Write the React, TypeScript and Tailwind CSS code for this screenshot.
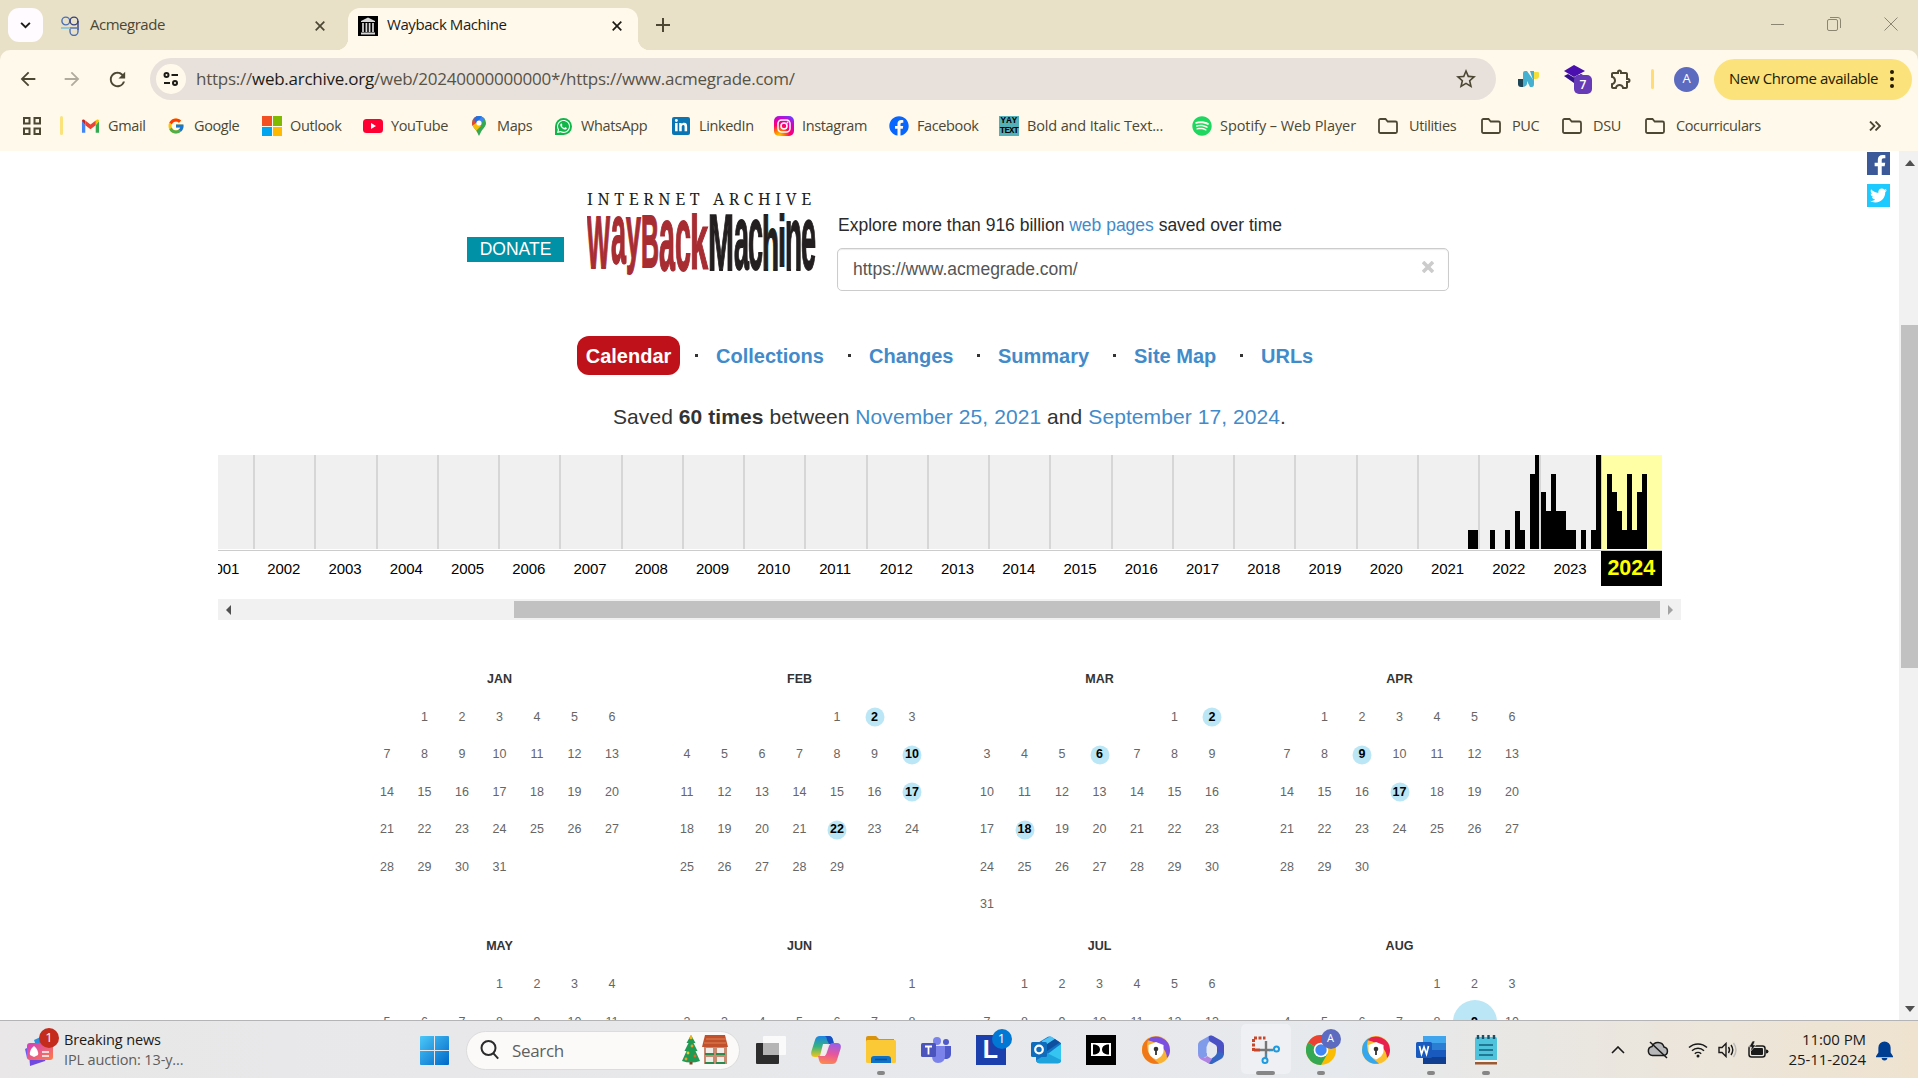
import React from "react";
import { FcGoogle } from "react-icons/fc";
import { FaTwitter, FaFacebookF, FaWhatsapp, FaLinkedinIn, FaSpotify, FaFacebook } from "react-icons/fa";
import { MdRefresh, MdStarOutline, MdOutlineExtension, MdArrowBack, MdArrowForward } from "react-icons/md";

type Bookmark = { label: string; icon: React.ReactNode; width: string; folder?: boolean; tracking?: string };

/* ---------- bookmark icons ---------- */

const GmailIcon = () => (
  <svg viewBox="0 0 20 16" className="h-4 w-[19px]">
    <path d="M1 3v12h3.5V7z" fill="#4285f4" />
    <path d="M19 3v12h-3.5V7z" fill="#34a853" />
    <path d="M1 3l3.5 4V2.5C3 .5 1 1 1 3z" fill="#c5221f" />
    <path d="M19 3l-3.5 4V2.5C17 .5 19 1 19 3z" fill="#fbbc04" />
    <path d="M4.500 2.300L10 6.500l5.500-4.200v5L10 11.500 4.500 7.300z" fill="#ea4335" />
  </svg>
);
const OutlookTiles = () => (
  <span className="grid size-5 grid-cols-2 gap-px">
    <i className="bg-[#f25022]" />
    <i className="bg-[#7fba00]" />
    <i className="bg-[#00a4ef]" />
    <i className="bg-[#ffb900]" />
  </span>
);
const YouTubeIcon = () => (
  <svg viewBox="0 0 20 14" className="h-[14px] w-5">
    <rect width="20" height="14" rx="3.500" fill="#ff0033" />
    <path d="M8 4l5 3-5 3z" fill="#fff" />
  </svg>
);
const MapsIcon = () => (
  <svg viewBox="0 0 14 20" className="h-5 w-[14px]">
    <defs>
      <clipPath id="pin">
        <path d="M7 0a7 7 0 0 1 7 7c0 4-3.500 5.500-5.500 10L7 20l-1.500-3C3.500 12.500 0 11 0 7a7 7 0 0 1 7-7z" />
      </clipPath>
    </defs>
    <g clipPath="url(#pin)">
      <rect width="14" height="20" fill="#34a853" />
      <path d="M0 0h14v2L7 8z" fill="#4285f4" />
      <path d="M0 0h5l2 5-5 5H0z" fill="#ea4335" />
      <path d="M4 0h6L4 8 2 3z" fill="#1a73e8" />
      <path d="M0 10l4-3 5 3-6 6z" fill="#fbbc04" />
    </g>
    <circle cx="7" cy="7" r="2.600" fill="#fff" />
  </svg>
);
const WhatsAppIcon = () => (
  <span className="flex size-[17px] items-center justify-center rounded-full rounded-bl-[3px] bg-[#10b748]">
    <FaWhatsapp className="size-[15px] text-white" />
  </span>
);
const LinkedInIcon = () => (
  <span className="flex size-[18px] items-center justify-center rounded-[2px] bg-[#0b74b3]">
    <FaLinkedinIn className="size-[14px] text-white" />
  </span>
);
const InstagramIcon = () => (
  <svg viewBox="0 0 20 20" className="size-5">
    <defs>
      <radialGradient id="ig" cx="0.250" cy="1" r="1.100">
        <stop offset="0" stopColor="#ffd600" />
        <stop offset="0.250" stopColor="#ff7a00" />
        <stop offset="0.500" stopColor="#ff0169" />
        <stop offset="0.800" stopColor="#d300c5" />
        <stop offset="1" stopColor="#7638fa" />
      </radialGradient>
    </defs>
    <rect width="20" height="20" rx="5" fill="url(#ig)" />
    <rect x="4" y="4" width="12" height="12" rx="3.500" fill="none" stroke="#fff" strokeWidth="1.500" />
    <circle cx="10" cy="10" r="3" fill="none" stroke="#fff" strokeWidth="1.500" />
    <circle cx="13.500" cy="6.500" r="0.900" fill="#fff" />
  </svg>
);
const YayTextIcon = () => (
  <span className="flex size-5 flex-col items-center justify-center bg-[#53b0b8] font-['Liberation_Mono'] text-[9px] leading-[10px] font-bold tracking-[0.200px] text-black">
    <span>YAY</span>
    <span className="tracking-[-0.800px]">TEXT</span>
  </span>
);
const FolderIcon = () => (
  <svg viewBox="0 0 20 16" className="h-4 w-5" fill="none" stroke="#4c4733" strokeWidth="1.800">
    <path d="M1 13.500V2.500Q1 1 2.500 1h5l2.200 2.500h7.800q1.500 0 1.500 1.500v8.500q0 1.500-1.500 1.500h-15Q1 15 1 13.500z" />
  </svg>
);

const bookmarks: Bookmark[] = [
  { label: "Gmail", icon: <GmailIcon />, width: "w-[86px]" },
  { label: "Google", icon: <FcGoogle className="size-[18px]" />, width: "w-[96px]" },
  { label: "Outlook", icon: <OutlookTiles />, width: "w-[101px]" },
  { label: "YouTube", icon: <YouTubeIcon />, width: "w-[106px]" },
  { label: "Maps", icon: <MapsIcon />, width: "w-[84px]" },
  { label: "WhatsApp", icon: <WhatsAppIcon />, width: "w-[118px]" },
  { label: "LinkedIn", icon: <LinkedInIcon />, width: "w-[103px]" },
  { label: "Instagram", icon: <InstagramIcon />, width: "w-[115px]" },
  { label: "Facebook", icon: <FaFacebook className="size-5 text-[#0866ff]" />, width: "w-[110px]" },
  { label: "Bold and Italic Text...", icon: <YayTextIcon />, width: "w-[193px]", tracking: "tracking-[-0.150px]" },
  { label: "Spotify – Web Player", icon: <FaSpotify className="size-5 text-[#1ed760]" />, width: "w-[186px]", tracking: "tracking-[-0.060px]" },
  { label: "Utilities", icon: <FolderIcon />, width: "w-[103px]", folder: true },
  { label: "PUC", icon: <FolderIcon />, width: "w-[81px]", folder: true },
  { label: "DSU", icon: <FolderIcon />, width: "w-[83px]", folder: true },
  { label: "Cocurriculars", icon: <FolderIcon />, width: "w-[140px]", folder: true },
];

/* ---------- browser chrome ---------- */

const CloseX = ({ className }: { className: string }) => (
  <svg viewBox="0 0 10 10" className={className} fill="none" stroke="currentColor" strokeWidth="1.700">
    <path d="M0.700 0.700l8.600 8.600M9.300 0.700L0.700 9.300" />
  </svg>
);

function TabStrip() {
  return (
    <div className="flex h-[50px] items-start bg-[#e8e1c8] pt-2 pl-2">
      <button className="flex h-[34px] w-[35px] items-center justify-center rounded-[11px] bg-[#fffbff]">
        <svg viewBox="0 0 12 8" className="h-[7px] w-[11px]" fill="none" stroke="#1d1b16" strokeWidth="2.200">
          <path d="M1 1l5 5 5-5" />
        </svg>
      </button>
      <div className="flex h-[34px] w-[305px] items-center pt-px pl-[18px]">
        <svg viewBox="0 0 18 20" className="h-5 w-[18px]" fill="none" strokeWidth="1.400">
          <circle cx="4.800" cy="5" r="3.900" stroke="#4a6fb5" />
          <circle cx="13" cy="5" r="3.900" stroke="#33407f" />
          <path d="M17 5v9" stroke="#33407f" />
          <path d="M0 12h9" stroke="#6fc0dd" />
          <path d="M9 12h7" stroke="#4a6fb5" />
          <path d="M9 13v2.500a3.800 3.800 0 0 0 8 0v-3" stroke="#4a6fb5" />
        </svg>
        <span className="ml-[11px] grow pb-[2px] text-[15px] tracking-[-0.480px] text-[#4c4733]">Acmegrade</span>
        <CloseX className="mr-[23px] size-[10px] text-[#4c4733]" />
      </div>
      <div className="relative flex h-[42px] w-[290px] items-center rounded-t-[12px] bg-[#fff9ec] pb-[7px] pl-[10px]">
        <span className="absolute bottom-0 -left-3 size-3 bg-[radial-gradient(circle_at_0_0,#e8e1c8_12px,#fff9ec_12.5px)]" />
        <span className="absolute -right-3 bottom-0 size-3 bg-[radial-gradient(circle_at_100%_0,#e8e1c8_12px,#fff9ec_12.5px)]" />
        <svg viewBox="0 0 20 20" className="size-5">
          <rect width="20" height="20" fill="#000" />
          <path d="M3 5l7-3.500L17 5v1H3zM3 16.500h14v2H3z" fill="#d8d8d8" />
          <path d="M5 7v9M8.400 7v9M11.600 7v9M15 7v9" stroke="#d8d8d8" strokeWidth="1.700" />
        </svg>
        <span className="ml-[9px] grow pb-[2px] text-[15px] tracking-[-0.420px] text-[#1d1b16]">Wayback Machine</span>
        <CloseX className="mr-[16px] size-[10px] text-[#1d1b16]" />
      </div>
      <svg viewBox="0 0 14 14" className="mt-[10px] ml-[18px] size-[14px]" stroke="#4c4733" strokeWidth="2">
        <path d="M7 0v14M0 7h14" />
      </svg>
      <div className="mt-[9px] mr-5 ml-auto flex items-center gap-[43px] text-[#8b8671]">
        <svg viewBox="0 0 13 14" className="h-[14px] w-[13px]" stroke="currentColor">
          <path d="M0 7.500h13" />
        </svg>
        <svg viewBox="0 0 14 14" className="size-[14px]" fill="none" stroke="currentColor">
          <rect x="0.500" y="2.500" width="10" height="11" rx="1.500" />
          <path d="M3 .5h8q2.500 0 2.500 2.500v8" />
        </svg>
        <svg viewBox="0 0 14 14" className="size-[14px]" stroke="currentColor">
          <path d="M.5 .5l13 13M13.500 .5l-13 13" />
        </svg>
      </div>
    </div>
  );
}

function Toolbar() {
  return (
    <div className="flex h-[58px] items-center rounded-t-[10px] bg-[#fff9ec] pl-[17px] text-[#4c4733]">
      <MdArrowBack className="size-[22px]" />
      <MdArrowForward className="ml-[22px] size-[22px] text-[#b0ab9d]" />
      <MdRefresh className="ml-[23px] size-[23px]" />
      <div className="ml-[21px] flex h-[42px] w-[1346px] items-center rounded-full bg-[#e8e1db] pl-[6px]">
        <span className="flex size-[30px] items-center justify-center rounded-full bg-[#fff9ec]">
          <svg viewBox="0 0 16 16" className="size-4" fill="none" stroke="#1d1b16" strokeWidth="2">
            <circle cx="3.500" cy="4" r="2" />
            <path d="M8.500 4H15M1 12h6" />
            <circle cx="12" cy="12" r="2" />
          </svg>
        </span>
        <span className="ml-[10px] grow text-[17px] tracking-[-0.250px] text-[#575246]">
          https://<span className="text-[#1d1b16]">web.archive.org</span>
          /web/20240000000000*/https://www.acmegrade.com/
        </span>
        <MdStarOutline className="mr-[18px] size-6" />
      </div>
      <svg viewBox="0 0 22 16" className="ml-[22px] h-4 w-[22px]">
        <path d="M0 8h5v8H3q-3 0-3-3z" fill="#1d4555" />
        <path d="M5 2q0-2 2-2h2l7 10v3q0 3-2 3h-2L9 10v3q0 2-4 3z" fill="#45b0cf" />
        <path d="M12 0h4v12z" fill="#45b0cf" />
        <path d="M16 1h4q1 0 1 1v3q0 3-3 3h-2z" fill="#f4df3a" />
      </svg>
      <span className="relative ml-6 h-[28px] w-[30px]">
        <svg viewBox="0 0 22 20" className="h-5 w-[22px]">
          <path d="M10 0l11 6-11 6L0 6z" fill="#4a0fae" />
          <path d="M0 11l4-2 6 3.500L17 9l4 2-11 7z" fill="#35108c" />
        </svg>
        <span className="absolute top-[10px] left-[10px] flex h-[19px] w-[18px] items-center justify-center rounded-[5px] bg-[#673ab7] text-[12px] font-semibold text-white">
          7
        </span>
      </span>
      <MdOutlineExtension className="ml-[15px] size-[24px]" />
      <span className="ml-[18px] h-5 w-[3px] rounded bg-[#ffdc76]" />
      <span className="ml-[20px] flex size-[25px] items-center justify-center rounded-full bg-[#5c6bc0] text-[13px] text-white">A</span>
      <div className="ml-[15px] flex h-[41px] w-[198px] items-center rounded-full bg-[#fbe27b] pb-px pl-[15px] text-[#231b00]">
        <span className="w-[154px] text-[15px] tracking-[-0.380px] whitespace-nowrap">New Chrome available</span>
        <span className="ml-[7px] flex flex-col gap-[3px]">
          <i className="size-1 rounded-full bg-[#231b00]" />
          <i className="size-1 rounded-full bg-[#231b00]" />
          <i className="size-1 rounded-full bg-[#231b00]" />
        </span>
      </div>
    </div>
  );
}

function BookmarksBar() {
  return (
    <div className="flex h-[43px] items-start bg-[#fff9ec] pt-2 pl-[23px] text-[#4c4733]">
      <svg viewBox="0 0 18 18" className="mt-px size-[18px]" fill="none" stroke="currentColor" strokeWidth="2">
        <path d="M1 1h5.500v5.500H1zM11.500 1H17v5.500h-5.500zM1 11.500h5.500V17H1zM11.500 11.500H17V17h-5.500z" />
      </svg>
      <span className="ml-[19px] h-[19px] w-[3px] rounded bg-[#fbe27b]" />
      <div className="ml-[17px] flex">
        {bookmarks.map((b) => (
          <div key={b.label} className={`flex h-5 items-center ${b.width} ${b.folder ? "gap-[11px]" : "gap-2"}`}>
            <span className="flex w-5 shrink-0 justify-center">{b.icon}</span>
            <span className={`text-[14.500px] whitespace-nowrap ${b.tracking ?? "tracking-[-0.380px]"}`}>{b.label}</span>
          </div>
        ))}
      </div>
      <svg viewBox="0 0 12 10" className="mt-[5px] ml-[84px] h-[10px] w-3" fill="none" stroke="currentColor" strokeWidth="1.800">
        <path d="M1 .5L5.500 5 1 9.500M6.500 .5L11 5 6.500 9.500" />
      </svg>
    </div>
  );
}

/* ---------- Wayback Machine page ---------- */

type Glyph = { c: string; x: number; w: number; size: number; y: number };
const red: Glyph[] = [
  { c: "W", x: 0, w: 23, size: 75, y: 55 },
  { c: "a", x: 24, w: 15, size: 86, y: 50 },
  { c: "y", x: 39, w: 15, size: 76, y: 45 },
  { c: "B", x: 54, w: 18, size: 75, y: 54 },
  { c: "a", x: 72, w: 16, size: 90, y: 57 },
  { c: "c", x: 88, w: 16, size: 90, y: 57 },
  { c: "k", x: 103, w: 18, size: 77, y: 56 },
];
const black: Glyph[] = [
  { c: "M", x: 121, w: 26, size: 79, y: 57 },
  { c: "a", x: 147, w: 15, size: 90, y: 56 },
  { c: "c", x: 161, w: 15, size: 90, y: 56 },
  { c: "h", x: 175, w: 17, size: 76, y: 57 },
  { c: "i", x: 191, w: 8, size: 72, y: 53 },
  { c: "n", x: 198, w: 17, size: 90, y: 57 },
  { c: "e", x: 214, w: 15, size: 90, y: 56 },
];
const letters = (glyphs: Glyph[]) =>
  glyphs.map((g) => (
    <tspan key={g.x} x={g.x} y={g.y} fontSize={g.size} textLength={g.w} lengthAdjust="spacingAndGlyphs">
      {g.c}
    </tspan>
  ));

function Logo() {
  return (
    <div className="ml-[23px] w-[229px]">
      <div className="h-[20px] font-['Noto_Serif','Liberation_Serif',serif] text-[16px] leading-[20px] tracking-[4.600px] whitespace-nowrap text-[#231f20]">
        INTERNET ARCHIVE
      </div>
      <svg viewBox="0 0 229 66" className="mt-[4px] h-[66px] w-[229px]" aria-label="Wayback Machine">
        <text fontFamily="Liberation Sans, sans-serif" fontWeight="700" strokeWidth="1.800">
          <tspan fill="#a72d33" stroke="#a72d33">
            {letters(red)}
          </tspan>
          <tspan fill="#231f20" stroke="#231f20">
            {letters(black)}
          </tspan>
        </text>
      </svg>
    </div>
  );
}

const navLinks = [
  { label: "Collections", width: "w-[153px]" },
  { label: "Changes", width: "w-[129px]" },
  { label: "Summary", width: "w-[136px]" },
  { label: "Site Map", width: "w-[127px]" },
  { label: "URLs", width: "w-[60px]" },
];

const captures: Record<number, number[]> = {
  2021: [0, 0, 0, 0, 0, 0, 0, 0, 0, 0, 1, 1],
  2022: [0, 0, 1, 0, 0, 1, 0, 2, 1, 0, 4, 5],
  2023: [3, 2, 4, 2, 2, 1, 1, 0, 1, 0, 1, 5],
  2024: [0, 4, 3, 2, 1, 4, 1, 3, 4, 0, 0, 0],
};
const barHeight = ["h-0", "h-[19px]", "h-[38px]", "h-[57px]", "h-[75px]", "h-[94px]"];
const years = Array.from({ length: 23 }, (_, i) => 2002 + i);

function Timeline() {
  return (
    <div className="ml-[218px] w-[1463px]">
      <div className="flex w-[1444px]">
        <div className="w-[35.200px] shrink-0 overflow-hidden">
          <div className="h-[94px] bg-[#f0f0f0]" />
          <div className="mt-px flex h-[36px] justify-end border-t border-[#ccc] pt-[8px] pr-[14px] text-[15px] leading-[20px] tracking-[-0.100px] text-black">2001</div>
        </div>
        {years.map((y) => (
          <div key={y} className="flex-1">
            <div className={`flex h-[94px] items-end ${y === 2024 ? "border-l border-[#ccc] bg-[#ffffa5]" : "border-l-2 border-[#d6d6d6] bg-[#f0f0f0]"}`}>
              {(captures[y] ?? []).map((n, m) => (
                <i key={m} className={`flex-1 bg-black ${barHeight[n]}`} />
              ))}
            </div>
            {y === 2024 ? (
              <div className="mt-px border-t border-[#ccc]">
                <div className="h-[35px] bg-black pt-[5px] text-center text-[21.500px] leading-[25px] font-bold text-[#ffff00]">2024</div>
              </div>
            ) : (
              <div className="mt-px h-[36px] border-t border-[#ccc] pt-[8px] text-center text-[15px] leading-[20px] tracking-[-0.100px] text-black">{y}</div>
            )}
          </div>
        ))}
      </div>
      <div className="mt-[13px] flex h-[21px] items-center bg-[#f1f1f1]">
        <i className="ml-[8px] border-y-[5px] border-r-[5px] border-y-transparent border-r-[#505050]" />
        <div className="ml-[283px] h-[17px] w-[1146px] bg-[#c1c1c1]" />
        <i className="ml-[8px] border-y-[5px] border-l-[5px] border-y-transparent border-l-[#a3a3a3]" />
      </div>
    </div>
  );
}

/* `days` is the last day that fits in the scrolled viewport. */
type Month = { name: string; offset: number; days: number; marked: Record<number, "sm" | "lg"> };
const months: Month[] = [
  { name: "JAN", offset: 1, days: 31, marked: {} },
  { name: "FEB", offset: 4, days: 29, marked: { 2: "sm", 10: "sm", 17: "sm", 22: "sm" } },
  { name: "MAR", offset: 5, days: 31, marked: { 2: "sm", 6: "sm", 18: "sm" } },
  { name: "APR", offset: 1, days: 30, marked: { 9: "sm", 17: "sm" } },
  { name: "MAY", offset: 3, days: 11, marked: {} },
  { name: "JUN", offset: 6, days: 8, marked: {} },
  { name: "JUL", offset: 1, days: 13, marked: {} },
  { name: "AUG", offset: 4, days: 10, marked: { 9: "lg" } },
];

function MonthGrid({ m }: { m: Month }) {
  return (
    <div className="h-[267.500px] w-[300px] px-[18.750px] text-[12.500px]">
      <div className="flex h-[38.500px] items-center justify-center font-bold text-[#333]">{m.name}</div>
      <div className="grid auto-rows-[37.500px] grid-cols-7 text-[#666]">
        {Array.from({ length: m.offset }, (_, i) => (
          <span key={`blank-${i}`} />
        ))}
        {Array.from({ length: m.days }, (_, i) => i + 1).map((d) => {
          const mark = m.marked[d];
          return (
            <span key={d} className={`relative flex items-center justify-center ${mark ? "font-bold text-black" : ""}`}>
              {mark && (
                <i className={`absolute top-1/2 left-1/2 -translate-1/2 rounded-full bg-[#bbe6f6] ${mark === "lg" ? "size-[44px]" : "size-[19px]"}`} />
              )}
              <span className="relative">{d}</span>
            </span>
          );
        })}
      </div>
    </div>
  );
}

function WaybackPage() {
  return (
    <div className="flex h-[869px] bg-white font-['Liberation_Sans',Arial,sans-serif] text-[17.500px] text-[#333]">
      <div className="relative w-[1899px] overflow-hidden">
        <div className="absolute top-px left-[1867px] flex flex-col gap-[9px]">
          <span className="flex size-[23px] items-end justify-end overflow-hidden bg-[#3b5998]">
            <FaFacebookF className="size-5 text-white" />
          </span>
          <span className="flex size-[23px] items-center justify-center bg-[#1dcaff]">
            <FaTwitter className="size-[17px] text-white" />
          </span>
        </div>
        <header className="flex h-[185px] items-start pt-[38px] pl-[467px]">
          <div className="mt-12 h-[25px] w-[97px] bg-[#0091a6] text-center text-[17.500px] leading-[24px] text-white">DONATE</div>
          <Logo />
          <div className="ml-[22px] pt-[24px]">
            <p className="leading-[24px] tracking-[-0.010px] text-[#2b2b2b]">
              Explore more than 916 billion <a className="text-[#428bca]">web pages</a> saved over time
            </p>
            <div className="mt-[11px] -ml-px flex h-[43px] w-[612px] items-center justify-between rounded-[5px] border border-[#ccc] pr-[14px] pb-px pl-[15px] text-[#555] shadow-[inset_0_1px_1px_rgba(0,0,0,0.08)]">
              <span>https://www.acmegrade.com/</span>
              <svg viewBox="0 0 12 12" className="-mt-1 size-3" stroke="#ccc" strokeWidth="3.600">
                <path d="M1 1l10 10M11 1L1 11" />
              </svg>
            </div>
          </div>
        </header>
        <nav className="flex h-[39px] items-center pl-[577px] text-[20px] font-bold text-[#428bca]">
          <a className="flex h-[39px] w-[103px] items-center justify-center rounded-[12px] bg-[#bf1119] text-white">Calendar</a>
          {navLinks.map((l, i) => (
            <React.Fragment key={l.label}>
              <span className={`flex justify-center ${i === 0 ? "w-[36px] pr-1" : "-ml-[35px] w-[35px] pr-1"}`}>
                <i className="-mt-px size-[3px] bg-[#333]" />
              </span>
              <a className={l.width}>{l.label}</a>
            </React.Fragment>
          ))}
        </nav>
        <p className="mt-[27px] h-[53px] pl-[613px] text-[21px] leading-[30px] tracking-[0.080px] text-[#333]">
          Saved <b>60 times</b> between <a className="text-[#428bca]">November 25, 2021</a> and{" "}
          <a className="text-[#428bca]">September 17, 2024</a>.
        </p>
        <Timeline />
        <div className="mt-[40px] ml-[349.500px] grid w-[1200px] grid-cols-4">
          {months.map((m) => (
            <MonthGrid key={m.name} m={m} />
          ))}
        </div>
      </div>
      <div className="flex w-[19px] flex-col items-end bg-[#f1f1f1] pt-[9px]">
        <i className="mr-[3px] border-x-[5px] border-b-[6px] border-x-transparent border-b-[#505050]" />
        <div className="mt-[159px] h-[343px] w-[17px] bg-[#c1c1c1]" />
        <i className="mt-auto mr-[3px] mb-2 border-x-[5px] border-t-[6px] border-x-transparent border-t-[#505050]" />
      </div>
    </div>
  );
}

/* ---------- taskbar ---------- */

const NewsIcon = () => (
  <svg viewBox="0 0 30 36" className="h-9 w-[34px]">
    <defs>
      <linearGradient id="newsg" x1="0" y1="0" x2="1" y2="1">
        <stop offset="0" stopColor="#d13fc0" />
        <stop offset="1" stopColor="#ff7b45" />
      </linearGradient>
    </defs>
    <path d="M9 8L20 3l6 12-12 7z" fill="#2f8fd8" />
    <path d="M4 20h20l-4 9-15 5z" fill="#7148e0" />
    <path d="M0 17l6-3v14l-4-2z" fill="#6a5cf0" />
    <rect x="2" y="11" width="26" height="17" rx="3" fill="url(#newsg)" />
    <path d="M9 14q5 4 4 9l-4 2-4-2q-1-5 4-9z" fill="#fff" />
    <path d="M17 20h7M17 24h7" stroke="#fff" strokeWidth="1.500" />
  </svg>
);
const TaskView = () => (
  <svg viewBox="0 0 30 30" className="size-[30px]">
    <rect x="0" y="8" width="23" height="21" rx="1" fill="#2d2d2d" />
    <rect x="7" y="1" width="23" height="19" rx="1" fill="#fafafa" />
    <path d="M7 8h16v12H7z" fill="#b5b5b5" />
  </svg>
);
const Copilot = () => (
  <svg viewBox="0 0 30 28" className="h-7 w-[30px]">
    <defs>
      <linearGradient id="cpA" x1="0" y1="0" x2="0" y2="1">
        <stop offset="0" stopColor="#1c84e6" />
        <stop offset="0.500" stopColor="#36b37e" />
        <stop offset="1" stopColor="#f5c518" />
      </linearGradient>
      <linearGradient id="cpB" x1="0.500" y1="0" x2="0.300" y2="1">
        <stop offset="0" stopColor="#9b5de5" />
        <stop offset="0.500" stopColor="#e8579a" />
        <stop offset="1" stopColor="#ff8a4a" />
      </linearGradient>
    </defs>
    <path d="M9 0h9q3 0 4 4l1 4h-5q-3 0-4 4l-2 6q-1 3-4 3H4q-5 0-3.500-6L4 4q1-4 5-4z" fill="url(#cpA)" />
    <path d="M14 0h4q3 0 4 4l1 4h-5l-2-4q0-3-2-4z" fill="#1a4fc4" />
    <path d="M21 28h-9q-3 0-4-4l-1-4h5q3 0 4-4l2-6q1-3 4-3h4q5 0 3.500 6L26 24q-1 4-5 4z" fill="url(#cpB)" />
    <path d="M12 8h5l-3 12H9z" fill="#f3ecef" />
  </svg>
);
const Explorer = () => (
  <svg viewBox="0 0 30 28" className="h-7 w-[30px]">
    <path d="M0 2q0-2 2-2h8l3 3h15v8H0z" fill="#d9930d" />
    <rect y="4" width="30" height="23" rx="1.500" fill="#fcc936" />
    <path d="M5 27v-4q0-3 3-3h14q3 0 3 3v4z" fill="#1173c8" />
    <path d="M9 23.500h12" stroke="#0b4f96" strokeWidth="1.500" />
  </svg>
);
const Teams = () => (
  <svg viewBox="0 0 30 26" className="h-[26px] w-[30px]">
    <circle cx="25" cy="5" r="3" fill="#5059c9" />
    <circle cx="16" cy="4" r="4" fill="#7b83eb" />
    <path d="M20 9h10v8q0 4-4 5h-6z" fill="#5059c9" />
    <path d="M11 9h13v10q0 7-7 7-6 0-6-7z" fill="#7b83eb" />
    <rect y="6" width="15" height="14" rx="1.500" fill="#4b53bc" />
    <path d="M4 9.500h7M7.500 9.500v8" stroke="#fff" strokeWidth="1.800" />
  </svg>
);
const LApp = () => (
  <span className="relative flex size-[30px] items-center justify-center bg-[#1c3fae] font-['Liberation_Sans'] text-[25px] font-bold text-white">
    L
    <i className="absolute -top-[6px] -right-[6px] flex size-5 items-center justify-center rounded-full bg-[#0078d4] font-['Open_Sans'] text-[13px] font-normal text-white not-italic">1</i>
  </span>
);
const OutlookApp = () => (
  <svg viewBox="0 0 30 28" className="h-7 w-[30px]">
    <path d="M5 8L17 .8q1.500-.8 3 0L30 7v17q0 3-3 3H9q-4 0-4-3z" fill="#1272c4" />
    <path d="M11 5l7-4q1.500-.8 3 0l3 2-12 8z" fill="#4cc2f5" />
    <path d="M24 3l5 3.500L13 17l-3-5z" fill="#0f4fa0" />
    <path d="M30 8v16q0 3-3 3H9l-3-1z" fill="#35c5f0" />
    <path d="M16 17l14 7q0 3-3 3.500H9q-3 0-4-3l8-5z" fill="#1fa3dd" />
    <rect y="6" width="16" height="15" rx="1.500" fill="#0f6cbd" />
    <circle cx="8" cy="13.500" r="3.800" fill="none" stroke="#fff" strokeWidth="2.200" />
  </svg>
);
const Dolby = () => (
  <svg viewBox="0 0 30 30" className="size-[30px]">
    <rect width="30" height="30" fill="#000" />
    <rect x="5" y="8" width="20" height="13" fill="#fff" />
    <path d="M7 9.500h2q5 1 5 5t-5 5H7zM23 9.500h-2q-5 1-5 5t5 5h2z" fill="#000" />
  </svg>
);
const Shield = ({ a, b, c }: { a: string; b: string; c: string }) => (
  <svg viewBox="0 0 28 28" className="size-7">
    <circle cx="14" cy="14" r="14" fill={b} />
    <path d="M5 4A14 14 0 0 1 28 14q0 5-3 8Q24 8 5 4z" fill={a} />
    <path d="M0 14A14 14 0 0 1 7 2Q0 16 17 27.500A14 14 0 0 1 0 14z" fill={c} />
    <path d="M14 6l7.500 3v6q0 5-7.500 8.500Q6.500 20 6.500 15V9z" fill="#fff" />
    <circle cx="14" cy="13" r="2.300" fill="#333" />
    <path d="M14 13v6" stroke="#333" strokeWidth="1.800" />
  </svg>
);
const M365 = () => (
  <svg viewBox="0 0 28 30" className="h-[30px] w-7">
    <path d="M12 1q3-1.500 5 1l-4 4q-3 2-3 5v10l-5 3q-4-2-4-6v-8q0-3 3-4.500z" fill="#7f9bea" />
    <path d="M12 1q2-1.200 4 0l8 4.500q3 2 3 5v9l-7-1v-6q0-2-2-3l-5-3q-2-2-1-5.500z" fill="#4a51c4" />
    <path d="M20 17l7 1q0 4-3 6l-8 4.500q-2 1-4 0l-3-2q3-1 5-2.500l4-3q2-1.500 2-4z" fill="#3566c4" />
    <path d="M1 18q1 5 5 5 3 0 4-2l5 3-3 4.500L4 24.500q-3-2-3-6.500z" fill="#b184e4" />
    <path d="M9.500 11.500L14 9l5 2.800v6L14.500 21l-5-3z" fill="#e6e8ef" />
  </svg>
);
const Snip = () => (
  <svg viewBox="0 0 28 28" className="size-7" fill="none">
    <path d="M1.500 15V2h12" stroke="#c8472b" strokeWidth="3" strokeDasharray="3 1.500" />
    <path d="M2 14h6" stroke="#c8472b" strokeWidth="3" />
    <path d="M14 5v17M8 14h13" stroke="#777" strokeWidth="2.400" />
    <circle cx="24.500" cy="13" r="2.500" stroke="#1e9be0" strokeWidth="2" />
    <circle cx="13" cy="24.500" r="2.500" stroke="#1e9be0" strokeWidth="2" />
    <path d="M17 14.500l5-1M14 17.500l-.5 4" stroke="#1e9be0" strokeWidth="1.500" />
  </svg>
);
const Chrome = () => (
  <span className="relative">
    <svg viewBox="0 0 30 30" className="size-[30px]">
      <circle cx="15" cy="15" r="15" fill="#fbbc04" />
      <path d="M15 15L2 7.500A15 15 0 0 1 28 7.500z" fill="#ea4335" />
      <path d="M2 7.500A15 15 0 0 0 15 30l6.500-11.300L15 15z" fill="#34a853" />
      <circle cx="15" cy="15" r="7.300" fill="#fff" />
      <circle cx="15" cy="15" r="5.700" fill="#4285f4" />
    </svg>
    <i className="absolute -top-[6px] -right-[5px] flex size-5 items-center justify-center rounded-full bg-[#5c6bc0] text-[11px] text-white not-italic">A</i>
  </span>
);
const Word365 = () => (
  <svg viewBox="0 0 30 28" className="h-7 w-[30px]">
    <rect x="7" width="23" height="28" rx="1.500" fill="#185abd" />
    <path d="M7 0h23v7H7z" fill="#41a5ee" />
    <path d="M7 7h23v7H7z" fill="#2b7cd3" />
    <path d="M7 21h23v7H7z" fill="#103f91" />
    <rect y="6" width="16" height="16" rx="1.500" fill="#185abd" />
    <path d="M3.500 10l2 8L8 11l2.500 7 2-8" stroke="#fff" strokeWidth="1.700" fill="none" />
  </svg>
);
const Notepad = () => (
  <svg viewBox="0 0 22 30" className="h-[30px] w-[22px]">
    <rect y="2" width="22" height="24" rx="1.500" fill="#4fc3dc" />
    <path d="M3 0v4M8 0v4M13.500 0v4M19 0v4" stroke="#15506b" strokeWidth="2.400" />
    <path d="M4 10h14M4 15h14M4 20h14" stroke="#15607c" strokeWidth="1.600" />
    <path d="M0 25h22v2H0z" fill="#f1f1f1" />
    <path d="M0 27h22v2.500H0z" fill="#9b5a32" />
  </svg>
);

const apps: { id: string; icon: React.ReactNode; state?: "open" | "active" }[] = [
  { id: "task-view", icon: <TaskView /> },
  { id: "copilot", icon: <Copilot /> },
  { id: "explorer", icon: <Explorer />, state: "open" },
  { id: "teams", icon: <Teams /> },
  { id: "l", icon: <LApp /> },
  { id: "outlook", icon: <OutlookApp /> },
  { id: "dolby", icon: <Dolby /> },
  { id: "secure", icon: <Shield a="#7b4fe0" b="#f9b233" c="#f07818" /> },
  { id: "m365", icon: <M365 /> },
  { id: "snip", icon: <Snip />, state: "active" },
  { id: "chrome", icon: <Chrome />, state: "open" },
  { id: "browser", icon: <Shield a="#e8204e" b="#fbc02d" c="#35a7ee" /> },
  { id: "word", icon: <Word365 />, state: "open" },
  { id: "notepad", icon: <Notepad />, state: "open" },
];

const TreeAndHouse = () => (
  <svg viewBox="0 0 46 30" className="h-[30px] w-[46px]">
    <path d="M9 0l4.500 8h-2l4 8h-2l4.500 10q-9 3-18 0l4.500-10h-2l4-8h-2z" fill="#1f9a52" />
    <path d="M7.500 27h3v2.500h-3z" fill="#7a4a24" />
    <path d="M9 0l2 3-2 1.500L7 3z" fill="#f2b51d" />
    <circle cx="10" cy="11" r="1.400" fill="#f09a2a" />
    <circle cx="6" cy="18" r="1.400" fill="#f2c22d" />
    <circle cx="13" cy="21" r="1.400" fill="#e8632a" />
    <circle cx="4" cy="24" r="1.400" fill="#f09a2a" />
    <path d="M22 11h23v18H22z" fill="#c98a72" />
    <path d="M23 0h20l3 12H20z" fill="#c1512c" />
    <path d="M24 4h20M22 8h22" stroke="#e08250" />
    <path d="M24 13h7v5h-7zM35 13h7v5h-7zM24 22h7v5h-7zM35 22h7v5h-7z" fill="#f1ece8" />
    <path d="M23 19h9M34 19h9M23 28h9M34 28h9" stroke="#2d8a4c" strokeWidth="2" />
  </svg>
);

function Taskbar() {
  return (
    <div className="flex h-[58px] items-center border-t border-[#b4b4b6] bg-linear-to-r from-[#e9e7e8] via-[#e6e9ed] via-70% to-[#efe3cf]">
      <div className="relative ml-[23px] flex w-[397px] items-center">
        <NewsIcon />
        <i className="absolute -top-[2px] left-[16px] flex size-5 items-center justify-center rounded-full bg-[#c42b1c] text-[13px] text-white not-italic">1</i>
        <div className="ml-[7px] text-[14.500px] leading-[20px] tracking-[-0.130px]">
          <div className="text-[#1a1a1a]">Breaking news</div>
          <div className="text-[#5d5d5d]">IPL auction: 13-y...</div>
        </div>
      </div>
      <svg viewBox="0 0 29 29" className="mt-[2px] size-[29px]">
        <defs>
          <linearGradient id="win" x1="0" y1="0" x2="1" y2="1">
            <stop offset="0" stopColor="#4cc8f8" />
            <stop offset="1" stopColor="#0067c8" />
          </linearGradient>
        </defs>
        <path d="M0 1q0-1 1-1h13v14H0zM15 0h13q1 0 1 1v13H15zM0 15h14v14H1q-1 0-1-1zM15 15h14v13q0 1-1 1H15z" fill="url(#win)" />
      </svg>
      <div className="mt-px ml-[17px] flex h-[39px] w-[274px] items-center rounded-full border border-[#dcdcdc] bg-[#fbfaf9] pr-[11px] pl-[13px]">
        <svg viewBox="0 0 19 20" className="h-[20px] w-[19px]" fill="none" stroke="#2b2b2b" strokeWidth="2">
          <circle cx="8.500" cy="8" r="7" />
          <path d="M13.200 13.200l5 5.500" />
        </svg>
        <span className="ml-[13px] grow pt-px text-[17px] tracking-[-0.340px] text-[#5f5f5f]">Search</span>
        <TreeAndHouse />
      </div>
      <div className="ml-[3px] flex">
        {apps.map((a) => (
          <div key={a.id} className="flex w-[55px] flex-col items-center">
            <div className={`flex h-[50px] w-[50px] items-center justify-center rounded-[5px] pt-px ${a.state === "active" ? "bg-[#eef0f3]" : ""}`}>{a.icon}</div>
            <i className={`-mt-[3px] h-1 rounded-full ${a.state === "active" ? "w-[19px] bg-[#868686]" : a.state === "open" ? "w-2 bg-[#868686]" : "w-2"}`} />
          </div>
        ))}
      </div>
      <svg viewBox="0 0 14 8" className="ml-[98px] h-2 w-[14px]" fill="none" stroke="#1a1a1a" strokeWidth="1.600">
        <path d="M1 7l6-6 6 6" />
      </svg>
      <svg viewBox="0 0 22 18" className="ml-[22px] h-[18px] w-[22px]" fill="none" stroke="#1a1a1a" strokeWidth="1.500">
        <path d="M5.500 14.500a4.500 4.500 0 0 1-.5-8.900A6.300 6.300 0 0 1 17 6a4.300 4.300 0 0 1-.5 8.500z" fill="#b7b7b9" />
        <path d="M3 1l17 16" />
      </svg>
      <svg viewBox="0 0 20 16" className="ml-[19px] h-4 w-5" fill="none" stroke="#1a1a1a" strokeWidth="1.500">
        <path d="M1 5.500a13 13 0 0 1 18 0M4 8.700a8.800 8.800 0 0 1 12 0M6.800 11.700a4.700 4.700 0 0 1 6.400 0" />
        <circle cx="10" cy="14" r="1.500" fill="#1a1a1a" stroke="none" />
      </svg>
      <svg viewBox="0 0 19 16" className="ml-[10px] h-4 w-[19px]" fill="none" stroke="#1a1a1a" strokeWidth="1.400">
        <path d="M1 5.500h3l4-4v13l-4-4H1z" />
        <path d="M10.500 5q2 3 0 6M13 3q3.500 5 0 10" />
        <path d="M15.500 1q5 7 0 14" stroke="#bbb" />
      </svg>
      <svg viewBox="0 0 21 17" className="ml-[11px] h-[17px] w-[21px]">
        <rect x="1" y="5" width="16" height="11" rx="2.500" fill="none" stroke="#1a1a1a" strokeWidth="1.500" />
        <rect x="3" y="7" width="12" height="7" rx="1" fill="#1a1a1a" />
        <path d="M18 8.500q2.500 0 2.500 2t-2.500 2z" fill="#1a1a1a" />
        <path d="M4.500 0L1 6h2.500l-1 4.500L8 4H5.500L7 0z" fill="#1a1a1a" stroke="#e9e6e3" strokeWidth="0.600" />
      </svg>
      <div className="ml-auto pb-[2px] text-right text-[15px] leading-[20px] tracking-[-0.080px] text-[#1a1a1a]">
        <div>11:00 PM</div>
        <div>25-11-2024</div>
      </div>
      <svg viewBox="0 0 18 20" className="mt-[2px] mr-[25px] ml-[10px] h-5 w-[17px]" fill="#003e92">
        <path d="M9 0a6.500 6.500 0 0 1 6.500 6.500v5L18 15.500v1H0v-1l2.500-4v-5A6.500 6.500 0 0 1 9 0zM6 17.500h6a3 2.500 0 0 1-6 0z" />
      </svg>
    </div>
  );
}

export default function App() {
  return (
    <div className="h-[1078px] w-[1918px] overflow-hidden bg-[#e8e1c8] font-['Open_Sans','Noto_Sans',sans-serif]">
      <TabStrip />
      <Toolbar />
      <BookmarksBar />
      <WaybackPage />
      <Taskbar />
    </div>
  );
}
